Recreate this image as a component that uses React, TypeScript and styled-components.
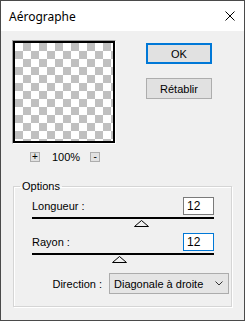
import React from 'react';
import styled, { createGlobalStyle } from 'styled-components';

const GlobalStyle = createGlobalStyle`
  html, body {
    margin: 0;
    padding: 0;
    background: #f0f0f0;
  }
  body {
    font-family: 'Liberation Sans', Arial, sans-serif;
    font-size: 11px;
    color: #000;
  }
`;

type TSliderProps = {
  label: string;
  value: string;
  position: number;
  focused?: boolean;
};

const TRACK_WIDTH = 182;
const THUMB_WIDTH = 15;

const SliderField = ({ label, value, position, focused }: TSliderProps) => (
  <SliderWrapper>
    <FieldRow>
      <FieldLabel>{label}</FieldLabel>
      <NumberInput $focused={focused}>{value}</NumberInput>
    </FieldRow>
    <Track />
    <ThumbRow>
      <svg
        width={THUMB_WIDTH}
        height={7}
        viewBox="0 0 15 7"
        style={{ marginLeft: Math.round(position * (TRACK_WIDTH - THUMB_WIDTH)) }}
      >
        <polygon points="0.5,6.5 7.5,0.5 14.5,6.5" fill="#f0f0f0" stroke="#000" strokeWidth="1" />
      </svg>
    </ThumbRow>
  </SliderWrapper>
);

const App = () => {
  return (
    <>
      <GlobalStyle />
      <Window>
        <TitleBar>
          <Title>Aérographe</Title>
          <svg width="10" height="10" viewBox="0 0 10 10">
            <path d="M0.5 0.5 L9.5 9.5 M9.5 0.5 L0.5 9.5" stroke="#000" strokeWidth="1" />
          </svg>
        </TitleBar>
        <Body>
          <TopRow>
            <PreviewColumn>
              <PreviewFrame>
                <Checker />
              </PreviewFrame>
              <ZoomRow>
                <ZoomButton>+</ZoomButton>
                <ZoomLabel>100%</ZoomLabel>
                <ZoomButton>-</ZoomButton>
              </ZoomRow>
            </PreviewColumn>
            <ButtonColumn>
              <DialogButton $primary>OK</DialogButton>
              <DialogButton>Rétablir</DialogButton>
            </ButtonColumn>
          </TopRow>
          <GroupBox>
            <Legend>Options</Legend>
            <SliderField label="Longueur :" value="12" position={0.61} />
            <SliderField label="Rayon :" value="12" position={0.48} focused />
            <DirectionRow>
              <FieldLabel>Direction :</FieldLabel>
              <SelectBox>
                <span>Diagonale à droite</span>
                <svg width="8" height="5" viewBox="0 0 8 5">
                  <path d="M0.5 0.5 L4 4 L7.5 0.5" fill="none" stroke="#333" strokeWidth="1" />
                </svg>
              </SelectBox>
            </DirectionRow>
          </GroupBox>
        </Body>
      </Window>
    </>
  );
};

export default App;

const Window = styled.div`
  width: 245px;
  height: 321px;
  box-sizing: border-box;
  border: 1px solid #4a4a4a;
  display: flex;
  flex-direction: column;
  background: #f0f0f0;
`;

const TitleBar = styled.div`
  height: 30px;
  flex-shrink: 0;
  background: #fff;
  display: flex;
  align-items: center;
  justify-content: space-between;
  padding: 0 9px 0 8px;
`;

const Title = styled.span`
  font-family: 'Noto Sans', 'Open Sans', sans-serif;
  font-size: 12px;
  margin-top: 1px;
`;

const Body = styled.div`
  flex: 1;
  padding: 9px 0 0 11px;
`;

const TopRow = styled.div`
  display: flex;
  align-items: flex-start;
`;

const PreviewColumn = styled.div`
  width: 104px;
  display: flex;
  flex-direction: column;
`;

const PreviewFrame = styled.div`
  border: 1px solid;
  border-color: #a0a0a0 #fff #fff #a0a0a0;
`;

const Checker = styled.div`
  width: 98px;
  height: 98px;
  border: 2px solid #000;
  background: repeating-conic-gradient(#c0c0c0 0 25%, #fff 0 50%) 0 0 / 16px 16px;
`;

const ZoomRow = styled.div`
  display: flex;
  align-items: center;
  margin-top: 8px;
  padding-left: 18px;
`;

const ZoomButton = styled.div`
  width: 10px;
  height: 10px;
  box-sizing: border-box;
  border: 1px solid #adadad;
  background: #e1e1e1;
  display: flex;
  align-items: center;
  justify-content: center;
  font-size: 10px;
  line-height: 8px;
`;

const ZoomLabel = styled.span`
  margin: 0 10px 0 12px;
  font-size: 11px;
  line-height: 10px;
`;

const ButtonColumn = styled.div`
  display: flex;
  flex-direction: column;
  gap: 14px;
  margin: 3px 0 0 30px;
`;

const DialogButton = styled.div<{ $primary?: boolean }>`
  width: 66px;
  height: 21px;
  box-sizing: border-box;
  border: ${(p) => (p.$primary ? '2px solid #0078d7' : '1px solid #adadad')};
  background: #e1e1e1;
  display: flex;
  align-items: center;
  justify-content: center;
  font-size: 11px;
`;

const GroupBox = styled.fieldset`
  width: 219px;
  box-sizing: border-box;
  margin: 18px 0 0 1px;
  padding: 0 0 12px 0;
  min-width: 0;
  border: 1px solid #d5d5d5;
  box-shadow: inset 1px 1px 0 #fff, 1px 1px 0 #fff;
`;

const Legend = styled.legend`
  margin-left: 6px;
  padding: 0 2px;
  font-size: 11px;
  line-height: 12px;
`;

const SliderWrapper = styled.div`
  padding: 0 17px 0 18px;
  margin-top: 5px;

  & + & {
    margin-top: 6px;
  }
`;

const FieldRow = styled.div`
  display: flex;
  align-items: center;
  justify-content: space-between;
`;

const FieldLabel = styled.span`
  font-size: 11px;
`;

const NumberInput = styled.div<{ $focused?: boolean }>`
  width: 31px;
  height: 18px;
  box-sizing: border-box;
  border: 1px solid ${(p) => (p.$focused ? '#0078d7' : '#7a7a7a')};
  background: #fff;
  padding-left: 3px;
  font-size: 12px;
  line-height: 16px;
`;

const Track = styled.div`
  height: 2px;
  margin-top: 2px;
  background: #000;
`;

const ThumbRow = styled.div`
  display: flex;
  height: 7px;
  margin-top: 1px;

  svg {
    display: block;
  }
`;

const DirectionRow = styled.div`
  display: flex;
  align-items: center;
  justify-content: flex-end;
  gap: 7px;
  margin-top: 10px;
  padding-right: 2px;
`;

const SelectBox = styled.div`
  width: 120px;
  height: 21px;
  box-sizing: border-box;
  border: 1px solid #acacac;
  background: #e5e5e5;
  display: flex;
  align-items: center;
  justify-content: space-between;
  padding: 0 5px 0 4px;
  font-size: 11px;
`;
